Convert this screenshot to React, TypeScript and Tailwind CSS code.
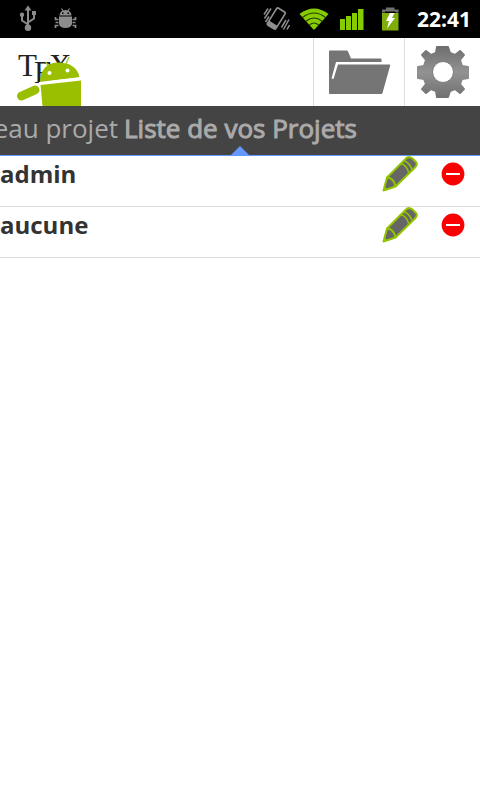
import React from "react";

const projects = ["admin", "aucune"];

function UsbIcon() {
  return (
    <svg className="h-7 w-5" viewBox="0 0 20 28" fill="none" stroke="#8c8c8c" strokeWidth="2" aria-hidden="true">
      <path d="M10 5v18M10 19.500l-6-4v-5M10 17.500l6-4V9" />
      <path d="M10 .500l3.500 5h-7z" fill="#8c8c8c" stroke="none" />
      <circle cx="10" cy="22.800" r="3.200" fill="#8c8c8c" stroke="none" />
      <circle cx="4" cy="9.800" r="2.200" fill="#8c8c8c" stroke="none" />
      <path d="M14 6h4v4h-4z" fill="#8c8c8c" stroke="none" />
    </svg>
  );
}

function DebugIcon() {
  return (
    <svg className="h-6 w-6" viewBox="0 0 24 24" fill="#8c8c8c" aria-hidden="true">
      <path d="M5.500 8.500a6 5.500 0 0 1 12 0zM5 9.500h13v7.500q-1 4-6.500 4T5 17z" />
      <path d="M7.500 1.500l2 3M15.500 1.500l-2 3" fill="none" stroke="#8c8c8c" strokeWidth="1.200" />
      <path d="M4.500 12.500h-3v-2.500M4.500 15.500h-3M4.500 18.500h-3v2.500M18.500 12.500h3v-2.500M18.500 15.500h3M18.500 18.500h3v2.500" fill="none" stroke="#8c8c8c" strokeWidth="1.700" />
      <path d="M8 5.500h1.500V7H8zM13.500 5.500H15V7h-1.500z" fill="#000" />
    </svg>
  );
}

function VibrateIcon() {
  return (
    <svg className="h-6 w-7" viewBox="0 0 28 24" fill="none" stroke="#8f8f8f" aria-hidden="true">
      <g transform="rotate(32 14 12)">
        <rect x="9" y="1.500" width="10" height="20" rx="1.500" strokeWidth="1.600" />
        <path d="M9 17h10v3.500q0 1-1 1h-8q-1 0-1-1z" fill="#8f8f8f" stroke="none" />
      </g>
      <path d="M2 7.500l4-6M2.500 11.500l6.500-10M3.500 15l3.500-5.500M19.500 20.500L24 13M21.500 22.500l5.500-10M25 22.500l2.500-4.500" strokeWidth="1.500" />
    </svg>
  );
}

function WifiIcon() {
  return (
    <svg className="h-6 w-8" viewBox="0 0 32 24" aria-hidden="true">
      <path d="M1.500 7Q16-4 30.500 7L17 22q-1 1.500-2 0z" fill="#86cc00" />
      <g fill="none" stroke="#243a00" strokeWidth="1.100">
        <path d="M4.500 10.500q11.500-9 23 0M8 14.200q8-6.500 16 0M11.500 18q4.500-4 9 0" />
      </g>
    </svg>
  );
}

function SignalIcon() {
  return (
    <svg className="h-6 w-6" viewBox="0 0 24 24" fill="#86cc00" aria-hidden="true">
      <path d="M0 12h5v11H0zM6 9h5v14H6zM12 6h5v17h-5zM18 2h5.500v21H18z" />
    </svg>
  );
}

function BatteryIcon() {
  return (
    <svg className="h-6 w-5" viewBox="0 0 20 24" aria-hidden="true">
      <path d="M2 6h16.500v17.500H2z" fill="#7fae0a" />
      <path d="M2 5.500V2.500h4V.500h8.500v2h4v3h-3V4.500H5v1z" fill="#707070" />
      <path d="M10 6h4.500l-2.500 5h3L7 21.500l2-7.500H6z" fill="#fff" />
    </svg>
  );
}

function Logo() {
  return (
    <svg className="h-14 w-18" viewBox="0 0 72 56" role="img" aria-label="TeX Android">
      <g fill="#222" fontFamily="'Liberation Serif', serif" fontSize="31">
        <text x="2" y="26">T</text>
        <text x="18" y="33">E</text>
        <text x="33" y="26">X</text>
      </g>
      <path d="M30 12l3 6M53 7l-3 7" stroke="#a8cc30" strokeWidth="1.400" />
      <path d="M24 32C24 21 30 13 41 12.500S62 17 63.500 27.500z" fill="#99bf00" />
      <path d="M23 33.500L65 28.500" stroke="#fff" strokeWidth="3" />
      <path d="M24.500 35L65 30.500V56H26.500z" fill="#99bf00" />
      <path d="M5.500 46L19 40" stroke="#fff" strokeWidth="10.500" strokeLinecap="round" />
      <path d="M5.500 46L19 40" stroke="#99bf00" strokeWidth="9" strokeLinecap="round" />
      <g fill="#fff">
        <circle cx="33.500" cy="23" r="2" />
        <circle cx="51.500" cy="20.500" r="2" />
      </g>
    </svg>
  );
}

function FolderIcon() {
  return (
    <svg className="h-11 w-16" viewBox="0 0 64 44" fill="#757575" aria-hidden="true">
      <path d="M2 1.500q0-1 1-1h16.500q1 0 1.500 1l3 7h29.500q1 0 1 1V12H9L4.500 28.500l2 .500L11 14.500h51.500q1 0 .700 1L55.500 43q-.300 1-1.300 1H3q-1 0-1-1z" />
    </svg>
  );
}

function GearIcon() {
  return (
    <svg className="size-13" viewBox="-26 -26 52 52" aria-hidden="true">
      <defs>
        <linearGradient id="gear" gradientUnits="userSpaceOnUse" x1="0" y1="-26" x2="0" y2="26">
          <stop offset="0" stopColor="#6d6d6d" />
          <stop offset=".5" stopColor="#929292" />
          <stop offset="1" stopColor="#707070" />
        </linearGradient>
      </defs>
      <path
        d="M-6-25H5L7-19L12-17L17-21L21-17L17-12L19-6L25-5V6L19 7L17 12L21 17L17 21L12 17L7 19L5 25H-6L-7 19L-12 17L-17 21L-21 17L-17 12L-19 7L-25 6V-5L-19-6L-17-12L-21-17L-17-21L-12-17L-7-19Z"
        fill="url(#gear)"
        stroke="url(#gear)"
        strokeWidth="2"
        strokeLinejoin="round"
      />
      <circle r="19.500" fill="url(#gear)" />
      <circle r="10.500" fill="#fff" stroke="#7b7b7b" />
    </svg>
  );
}

function PencilIcon() {
  return (
    <svg className="h-9 w-9" viewBox="0 0 36 36" aria-hidden="true">
      <g fill="#666" stroke="#93c400" strokeWidth="2" strokeLinejoin="round">
        <path d="M1.500 34.500L5 21.500L23.500 3Q26.500-.500 30.500 2.500L34 6q2 2.500-1 5.500L13.500 30.500z" />
        <path d="M5 21.500Q12 22 13.500 30.500" fill="none" />
        <path d="M19 7.500q6 2 7.500 9M22 4.500q6 3 8 9" fill="none" strokeWidth="1.600" />
      </g>
      <path d="M1 35l1.500-4.500 3 3z" fill="#93c400" />
    </svg>
  );
}

function RemoveIcon() {
  return (
    <svg className="size-6" viewBox="0 0 24 24" aria-hidden="true">
      <circle cx="12" cy="12" r="11.400" fill="#fb0000" />
      <path d="M5 12h14" stroke="#fff" strokeWidth="2" />
    </svg>
  );
}

export default function App() {
  return (
    <div className="min-h-screen bg-white font-['Open_Sans','Noto_Sans',sans-serif]">
      <div className="flex h-[38px] items-center bg-black pr-[9px] pl-[18px] text-white">
        <UsbIcon />
        <div className="ml-4">
          <DebugIcon />
        </div>
        <div className="ml-auto flex items-center">
          <VibrateIcon />
          <div className="ml-2">
            <WifiIcon />
          </div>
          <div className="ml-[10px]">
            <SignalIcon />
          </div>
          <div className="ml-4">
            <BatteryIcon />
          </div>
          <time className="ml-[17px] text-[21px] leading-6 font-bold">22:41</time>
        </div>
      </div>

      <header className="flex h-[68px] items-stretch">
        <div className="flex flex-1 items-end pl-4">
          <Logo />
        </div>
        <button type="button" aria-label="Ouvrir" className="flex w-[91px] items-center justify-center border-l border-[#dddddd]">
          <FolderIcon />
        </button>
        <button type="button" aria-label="Paramètres" className="flex w-[76px] items-center justify-center border-l border-[#dddddd]">
          <GearIcon />
        </button>
      </header>

      <nav className="relative flex h-[50px] items-start gap-[6px] overflow-hidden border-b border-[#6699ff] bg-[#444444] pt-1 text-[26px] leading-9 whitespace-nowrap text-[#aaaaaa]">
        <button type="button" className="flex w-[118px] shrink-0 justify-end overflow-hidden">
          Nouveau projet
        </button>
        <button type="button" aria-current="page" className="[-webkit-text-stroke:1px_#aaaaaa]">
          Liste de vos Projets
        </button>
        <svg className="absolute bottom-0 left-1/2 h-[9px] w-[18px] -translate-x-1/2" viewBox="0 0 18 9" aria-hidden="true">
          <path d="M0 9L9 0l9 9z" fill="#6699ff" />
        </svg>
      </nav>

      <ul>
        {projects.map((name) => (
          <li key={name} className="flex h-[51px] items-start border-b border-[#dddddd] pr-[15px]">
            <span className="flex-1 text-[24px] leading-9 font-bold text-[#333333]">{name}</span>
            <button type="button" aria-label={"Modifier " + name} className="mr-[23px]">
              <PencilIcon />
            </button>
            <button type="button" aria-label={"Supprimer " + name} className="pt-[6px]">
              <RemoveIcon />
            </button>
          </li>
        ))}
      </ul>
    </div>
  );
}
